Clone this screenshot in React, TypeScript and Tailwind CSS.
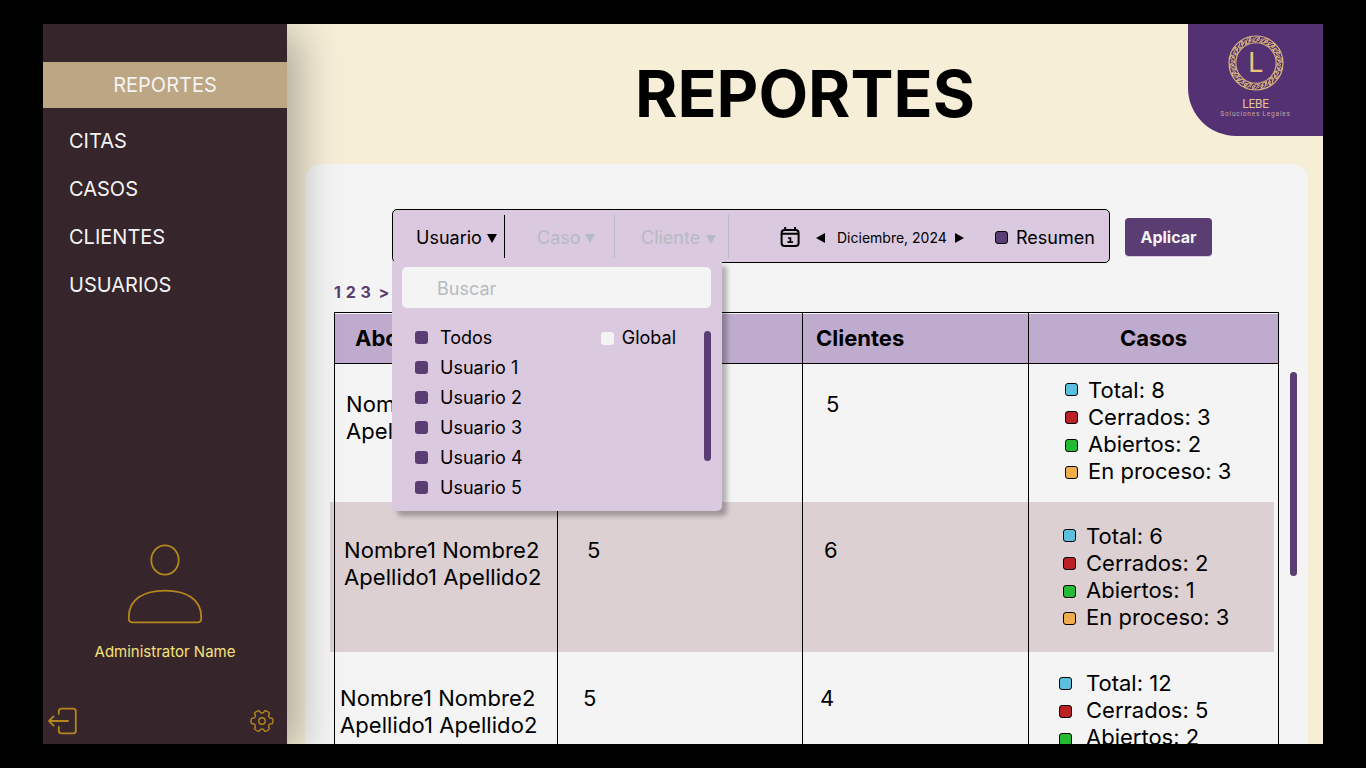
import React from "react";

const NAV = ["CITAS", "CASOS", "CLIENTES", "USUARIOS"];

type Row = {
  name: string;
  citasPad: string;
  clientesPad: string;
  casosPad: string;
  gap: string;
  height: string;
  nudge: string;
  band: boolean;
  citas: number;
  clientes: number;
  cases: number[];
};

const ROWS: Row[] = [
  { name: "pt-[27px] pl-[11px]", citasPad: "pt-[27px] pl-[31px]", clientesPad: "pt-[27px] pl-[23px]", casosPad: "pt-[13px] pl-[36px]", gap: "gap-[10px]", height: "h-[138px]", nudge: "", band: false, citas: 5, clientes: 5, cases: [8, 3, 2, 3] },
  { name: "pt-[35px] pl-[9px]", citasPad: "pt-[35px] pl-[29px]", clientesPad: "pt-[35px] pl-[21px]", casosPad: "pt-[21px] pl-[34px]", gap: "gap-[10px]", height: "h-[150px]", nudge: "", band: true, citas: 5, clientes: 6, cases: [6, 2, 1, 3] },
  { name: "pt-[33px] pl-[5px]", citasPad: "pt-[33px] pl-[25px]", clientesPad: "pt-[33px] pl-[17px]", casosPad: "pt-[18px] pl-[30px]", gap: "gap-[14px]", height: "h-[150px]", nudge: "translate-y-px", band: false, citas: 5, clientes: 4, cases: [12, 5, 2] },
];

const CASE_KINDS = [
  { label: "Total", color: "mb-[2px] bg-[#5bc0de]" },
  { label: "Cerrados", color: "bg-[#bb2124]" },
  { label: "Abiertos", color: "mt-[2px] bg-[#22bb33]" },
  { label: "En proceso", color: "mt-[2px] bg-[#f0ad4e]" },
];

const GRID = "grid grid-cols-[223px_245px_226px_251px]";

function LogoMark() {
  const items = Array.from({ length: 18 }, (_, i) => i * 20);
  return (
    <svg width="56" height="56" viewBox="-28 -28 56 56" fill="none" stroke="#d9b67c">
      <circle r="27" strokeWidth="1.2" />
      <circle r="20.2" strokeWidth="1.1" />
      {items.map((a) => (
        <g key={a} transform={`rotate(${a})`} strokeWidth="1">
          <path d="M-4 -20.8C-1 -21 -2 -26.2 1.5 -26.2C4 -26.2 4 -22.5 2 -22.5C.6 -22.5 .8 -24.2 1.8 -24.2" />
          <path d="M4 -26C1 -25 2 -21 -1 -21C-3.4 -21 -4 -24.6 -2 -24.8" />
        </g>
      ))}
    </svg>
  );
}

function Logo() {
  return (
    <div className="absolute top-0 right-0 flex h-[112px] w-[135px] flex-col items-center rounded-bl-[48px] bg-[#533173] pt-[11px] font-[Roboto,sans-serif]">
      <div className="relative h-[56px] w-[56px]">
        <LogoMark />
        <span className="absolute inset-0 flex items-center justify-center text-[27px] leading-none text-[#ecc67c]">L</span>
      </div>
      <span className="mt-[7px] text-[12px] leading-[12px] tracking-[-0.3px] text-[#e5c48c]">LEBE</span>
      <span className="text-[6.5px] leading-[8px] tracking-[0.8px] whitespace-nowrap text-[#c9a999]">Soluciones Legales</span>
    </div>
  );
}

function gearOutline() {
  const controls: [number, number][] = [];
  for (let i = 0; i < 6; i++) {
    const base = i * 60;
    for (const [offset, radius] of [[-18, 8.2], [-16, 11.4], [16, 11.4], [18, 8.2]]) {
      const t = ((base + offset) * Math.PI) / 180;
      controls.push([12 + radius * Math.cos(t), 12 + radius * Math.sin(t)]);
    }
  }
  const mid = (i: number) => {
    const a = controls[i % controls.length];
    const b = controls[(i + 1) % controls.length];
    return `${((a[0] + b[0]) / 2).toFixed(2)} ${((a[1] + b[1]) / 2).toFixed(2)}`;
  };
  let d = `M${mid(0)}`;
  for (let i = 1; i <= controls.length; i++) {
    const c = controls[i % controls.length];
    d += `Q${c[0].toFixed(2)} ${c[1].toFixed(2)} ${mid(i)}`;
  }
  return d + "Z";
}

function Sidebar() {
  return (
    <aside className="z-10 flex h-full w-[244px] shrink-0 flex-col bg-[#36252b] pt-[38px] shadow-[12px_8px_40px_rgba(0,0,0,0.3)]">
      <div className="flex h-[46px] items-center justify-center bg-[#bca683] text-[20px] text-[#f4f4f4]">REPORTES</div>
      <nav className="mt-[9px] flex flex-col pl-[26px] text-[20px] text-[#f4f4f4]">
        {NAV.map((n) => (
          <span key={n} className="flex h-12 items-center">{n}</span>
        ))}
      </nav>
      <div className="mt-auto flex flex-col items-center">
        <svg width="76" height="82" viewBox="0 0 76 82" fill="none" stroke="#b6861f" strokeWidth="1.8">
          <ellipse cx="38" cy="17" rx="13.7" ry="14.7" />
          <path d="M1.8 74C1.8 56 17 47.6 38 47.6S74.2 56 74.2 74V75.6Q74.2 79.4 70.4 79.4H5.6Q1.8 79.4 1.8 75.6Z" />
        </svg>
        <span className="mt-[18px] text-[15px] leading-[18px] text-[#f6e27a]">Administrator Name</span>
      </div>
      <div className="mt-[43px] flex h-[40px] items-start justify-between pr-[13px] pl-[4px]">
        <svg className="mt-px" width="32" height="32" viewBox="0 0 32 32" fill="none" stroke="#b6861f" strokeWidth="1.8" strokeLinecap="round" strokeLinejoin="round">
          <path d="M11.8 9V6.2Q11.8 3.6 14.4 3.6H26.2Q28.8 3.6 28.8 6.2V25.8Q28.8 28.4 26.2 28.4H14.4Q11.8 28.4 11.8 25.8V22" />
          <path d="M21 16H2M6.6 11.4L2 16L6.6 20.6" />
        </svg>
        <svg className="mt-[5px]" width="24" height="24" viewBox="0 0 24 24" fill="none" stroke="#b6861f" strokeWidth="1.4" strokeLinejoin="round">
          <circle cx="12" cy="12" r="3.2" />
          <path d={gearOutline()} />
        </svg>
      </div>
    </aside>
  );
}

function Caret({ className }: { className: string }) {
  return (
    <svg className={className} width="10" height="9" viewBox="0 0 10 9" fill="currentColor">
      <path d="M0 0H10L5 9Z" />
    </svg>
  );
}

function Dropdown() {
  return (
    <div className="absolute top-[51px] -left-px z-20 flex h-[250px] w-[330px] flex-col rounded-b-[5px] bg-[#dbc9df] px-[10px] pt-[6px] shadow-[5px_5px_5px_rgba(0,0,0,0.28)]">
      <div className="flex h-[41px] w-[309px] items-center rounded-[5px] bg-[#f4f4f4] pt-[2px] pl-[35px] text-[18px] text-[#b5bbc2]">Buscar</div>
      <div className="mt-[14px] flex justify-between pl-[13px]">
        <div className="flex flex-col">
          {["Todos", "Usuario 1", "Usuario 2", "Usuario 3", "Usuario 4", "Usuario 5"].map((t) => (
            <label key={t} className="flex h-[30px] items-center gap-[12px] text-[18px]">
              <span className="h-[13px] w-[13px] rounded-[3px] bg-[#5a3d72]" />
              {t}
            </label>
          ))}
        </div>
        <div className="flex">
          <label className="mr-[28px] flex h-[30px] items-center gap-[8px] text-[18px]">
            <span className="mt-[2px] h-[13px] w-[13px] rounded-[3px] bg-[#f4f4f4]" />
            Global
          </label>
          <span className="mt-[9px] mr-px h-[130px] w-[7px] rounded-full bg-[#5a3d72]" />
        </div>
      </div>
    </div>
  );
}

function FilterBar() {
  return (
    <div className="flex items-start pl-[87px]">
      <div className="relative flex h-[54px] w-[718px] items-center rounded-[5px] border border-black bg-[#dbc9df] text-[18px]">
        <div className="flex h-[43px] w-[112px] items-center border-r border-black pt-[2px] pl-[23px]">
          Usuario
          <Caret className="mt-[3px] ml-[5px]" />
        </div>
        <div className="flex h-[43px] w-[110px] items-center border-r border-[#b5bbc2] pt-[2px] pl-[32px] text-[#b5bbc2]">
          Caso
          <Caret className="mt-[3px] ml-[4px]" />
        </div>
        <div className="mt-px flex h-[43px] w-[114px] items-center border-r border-[#b5bbc2] pt-[2px] pl-[26px] text-[#b5bbc2]">
          Cliente
          <Caret className="mt-[3px] ml-[6px]" />
        </div>
        <div className="flex items-center pt-[3px] pl-[51px]">
          <svg width="20" height="21" viewBox="0 0 20 21" fill="none" stroke="#000" strokeWidth="2">
            <rect x="1.6" y="3" width="17" height="16" rx="3" />
            <path d="M1.6 6.8H18.6M5.2 0V3M15 0V3" />
            <path d="M8.2 11.2H10.4V15M7.4 15.2H13" strokeWidth="1.8" />
          </svg>
          <svg className="ml-[16px]" width="9" height="10" viewBox="0 0 9 10"><path d="M9 0V10L0 5Z" /></svg>
          <span className="ml-[12px] w-[109px] text-[14px] whitespace-nowrap">Diciembre, 2024</span>
          <svg className="ml-[9px]" width="9" height="10" viewBox="0 0 9 10"><path d="M0 0V10L9 5Z" /></svg>
          <span className="ml-[31px] h-[13px] w-[13px] rounded-[3px] border border-black bg-[#5a3d72]" />
          <span className="ml-[8px]">Resumen</span>
        </div>
        <Dropdown />
      </div>
      <button className="mt-[9px] ml-[15px] h-[38px] w-[87px] rounded-[4px] bg-[#5a3d72] text-[16px] font-bold text-[#f4f4f4] shadow-[0_1px_0_#dbc9df]">Aplicar</button>
    </div>
  );
}

function Table() {
  return (
    <div className="ml-[29px] w-[945px] border-t border-black text-[22px] leading-[27px]">
      <div className={`${GRID} h-[51px] border-b border-black bg-[#bfabcd] font-bold shadow-[inset_0_1px_0_#f4f4f4]`}>
        <div className="flex items-center border-l border-black pl-[20px]">Abogado</div>
        <div className="flex items-center border-l border-black pl-[14px]">Citas</div>
        <div className="flex items-center border-l border-black pl-[13px]">Clientes</div>
        <div className="flex items-center justify-center border-x border-black">Casos</div>
      </div>
      {ROWS.map((r, i) => (
        <div key={i} className={`relative isolate ${GRID} ${r.height}`}>
          {r.band && <div className="absolute inset-y-0 right-[5px] -left-1 -z-10 bg-[#dcd0d2]" />}
          <div className={`border-l border-black tracking-[0.07px] whitespace-nowrap ${r.name}`}>
            Nombre1 Nombre2
            <br />
            Apellido1 Apellido2
          </div>
          <div className={`border-l border-black ${r.citasPad}`}>{r.citas}</div>
          <div className={`border-l border-black ${r.clientesPad}`}>{r.clientes}</div>
          <div className={`border-x border-black ${r.casosPad}`}>
            {r.cases.map((n, j) => (
              <div key={j} className={`flex h-[27px] items-center ${r.gap}`}>
                <span className={`h-[13px] w-[13px] rounded-[3px] border border-black ${CASE_KINDS[j].color} ${r.nudge}`} />
                {CASE_KINDS[j].label}: {n}
              </div>
            ))}
          </div>
        </div>
      ))}
    </div>
  );
}

export default function App() {
  return (
    <div className="flex h-[768px] w-[1366px] items-center justify-center bg-black font-[Inter,sans-serif] text-black">
      <div className="relative flex h-[720px] w-[1280px] overflow-hidden bg-[#f6eed7]">
        <Sidebar />
        <main className="flex min-w-0 flex-1 flex-col">
          <header className="flex h-[140px] shrink-0 items-center justify-center">
            <h1 className="text-[64.5px] font-bold">REPORTES</h1>
          </header>
          <section className="mr-[15px] ml-[18px] flex min-h-0 flex-1 flex-col overflow-hidden rounded-t-[16px] bg-[#f4f4f4] pt-[45px]">
            <FilterBar />
            <div className="ml-[29px] flex h-[49px] shrink-0 items-center pt-[9px] text-[16px] font-bold tracking-[0.5px] text-[#5a3d72]">
              1 2 3<span className="ml-[7px]">&gt;</span>
            </div>
            <div className="flex items-start">
              <Table />
              <span className="mt-[60px] ml-[11px] h-[204px] w-[7px] rounded-full bg-[#5a3d72]" />
            </div>
          </section>
        </main>
        <Logo />
      </div>
    </div>
  );
}
